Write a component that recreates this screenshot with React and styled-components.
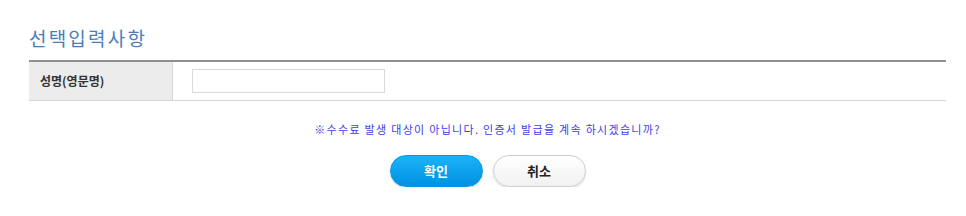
import React, { useState } from "react";
import styled, { createGlobalStyle } from "styled-components";

const GlobalStyle = createGlobalStyle`
  body {
    margin: 0;
    background: #fff;
    font-family: "Noto Sans CJK KR", "Noto Sans", sans-serif;
  }
`;

function App() {
  const [name, setName] = useState("");
  return (
    <Page>
      <GlobalStyle />
      <Title>선택입력사항</Title>
      <Table>
        <tbody>
          <tr>
            <Label>성명(영문명)</Label>
            <Cell>
              <Input value={name} onChange={(e) => setName(e.target.value)} />
            </Cell>
          </tr>
        </tbody>
      </Table>
      <Notice>※수수료 발생 대상이 아닙니다. 인증서 발급을 계속 하시겠습니까?</Notice>
      <Buttons>
        <Button primary>확인</Button>
        <Button>취소</Button>
      </Buttons>
    </Page>
  );
}

export default App;

const Page = styled.div`
  width: 917px;
  margin-left: 29px;
  padding-top: 25px;
`;

const Title = styled.h2`
  margin: 0 0 9px;
  font-size: 19px;
  font-weight: 400;
  line-height: 26px;
  color: #4b7db6;
  letter-spacing: 2.2px;
`;

const Table = styled.table`
  width: 100%;
  border-collapse: collapse;
  border-top: 2px solid #8f8f8f;
  border-bottom: 1px solid #d5d5d5;
`;

const Label = styled.th`
  width: 143px;
  height: 39px;
  padding: 0 0 0 11px;
  box-sizing: border-box;
  background: #ececec;
  border-right: 1px solid #d5d5d5;
  text-align: left;
  font-size: 12px;
  font-weight: 700;
  color: #333;
`;

const Cell = styled.td`
  padding: 0 0 0 19px;
`;

const Input = styled.input`
  display: block;
  width: 193px;
  height: 24px;
  box-sizing: border-box;
  border: 1px solid #d9d9d9;
  outline: none;
  padding: 0 4px;
  font-size: 12px;
`;

const Notice = styled.p`
  margin: 20px 0 0;
  text-align: center;
  font-size: 11px;
  line-height: 16px;
  letter-spacing: 1.3px;
  color: #3d3de8;
`;

const Buttons = styled.div`
  display: flex;
  justify-content: center;
  gap: 10px;
  margin-top: 18px;
`;

const Button = styled.button`
  width: 93px;
  height: 32px;
  border-radius: 16px;
  font-family: inherit;
  font-size: 13px;
  font-weight: 700;
  cursor: pointer;
  border: 1px solid ${(p) => (p.primary ? "#0a97e6" : "#d0d0d0")};
  color: ${(p) => (p.primary ? "#fff" : "#222")};
  background: ${(p) =>
    p.primary
      ? "linear-gradient(#1bb3f7, #0091e2)"
      : "linear-gradient(#ffffff, #f1f1f1)"};
  box-shadow: 0 1px 2px rgba(0, 0, 0, 0.15);
`;
